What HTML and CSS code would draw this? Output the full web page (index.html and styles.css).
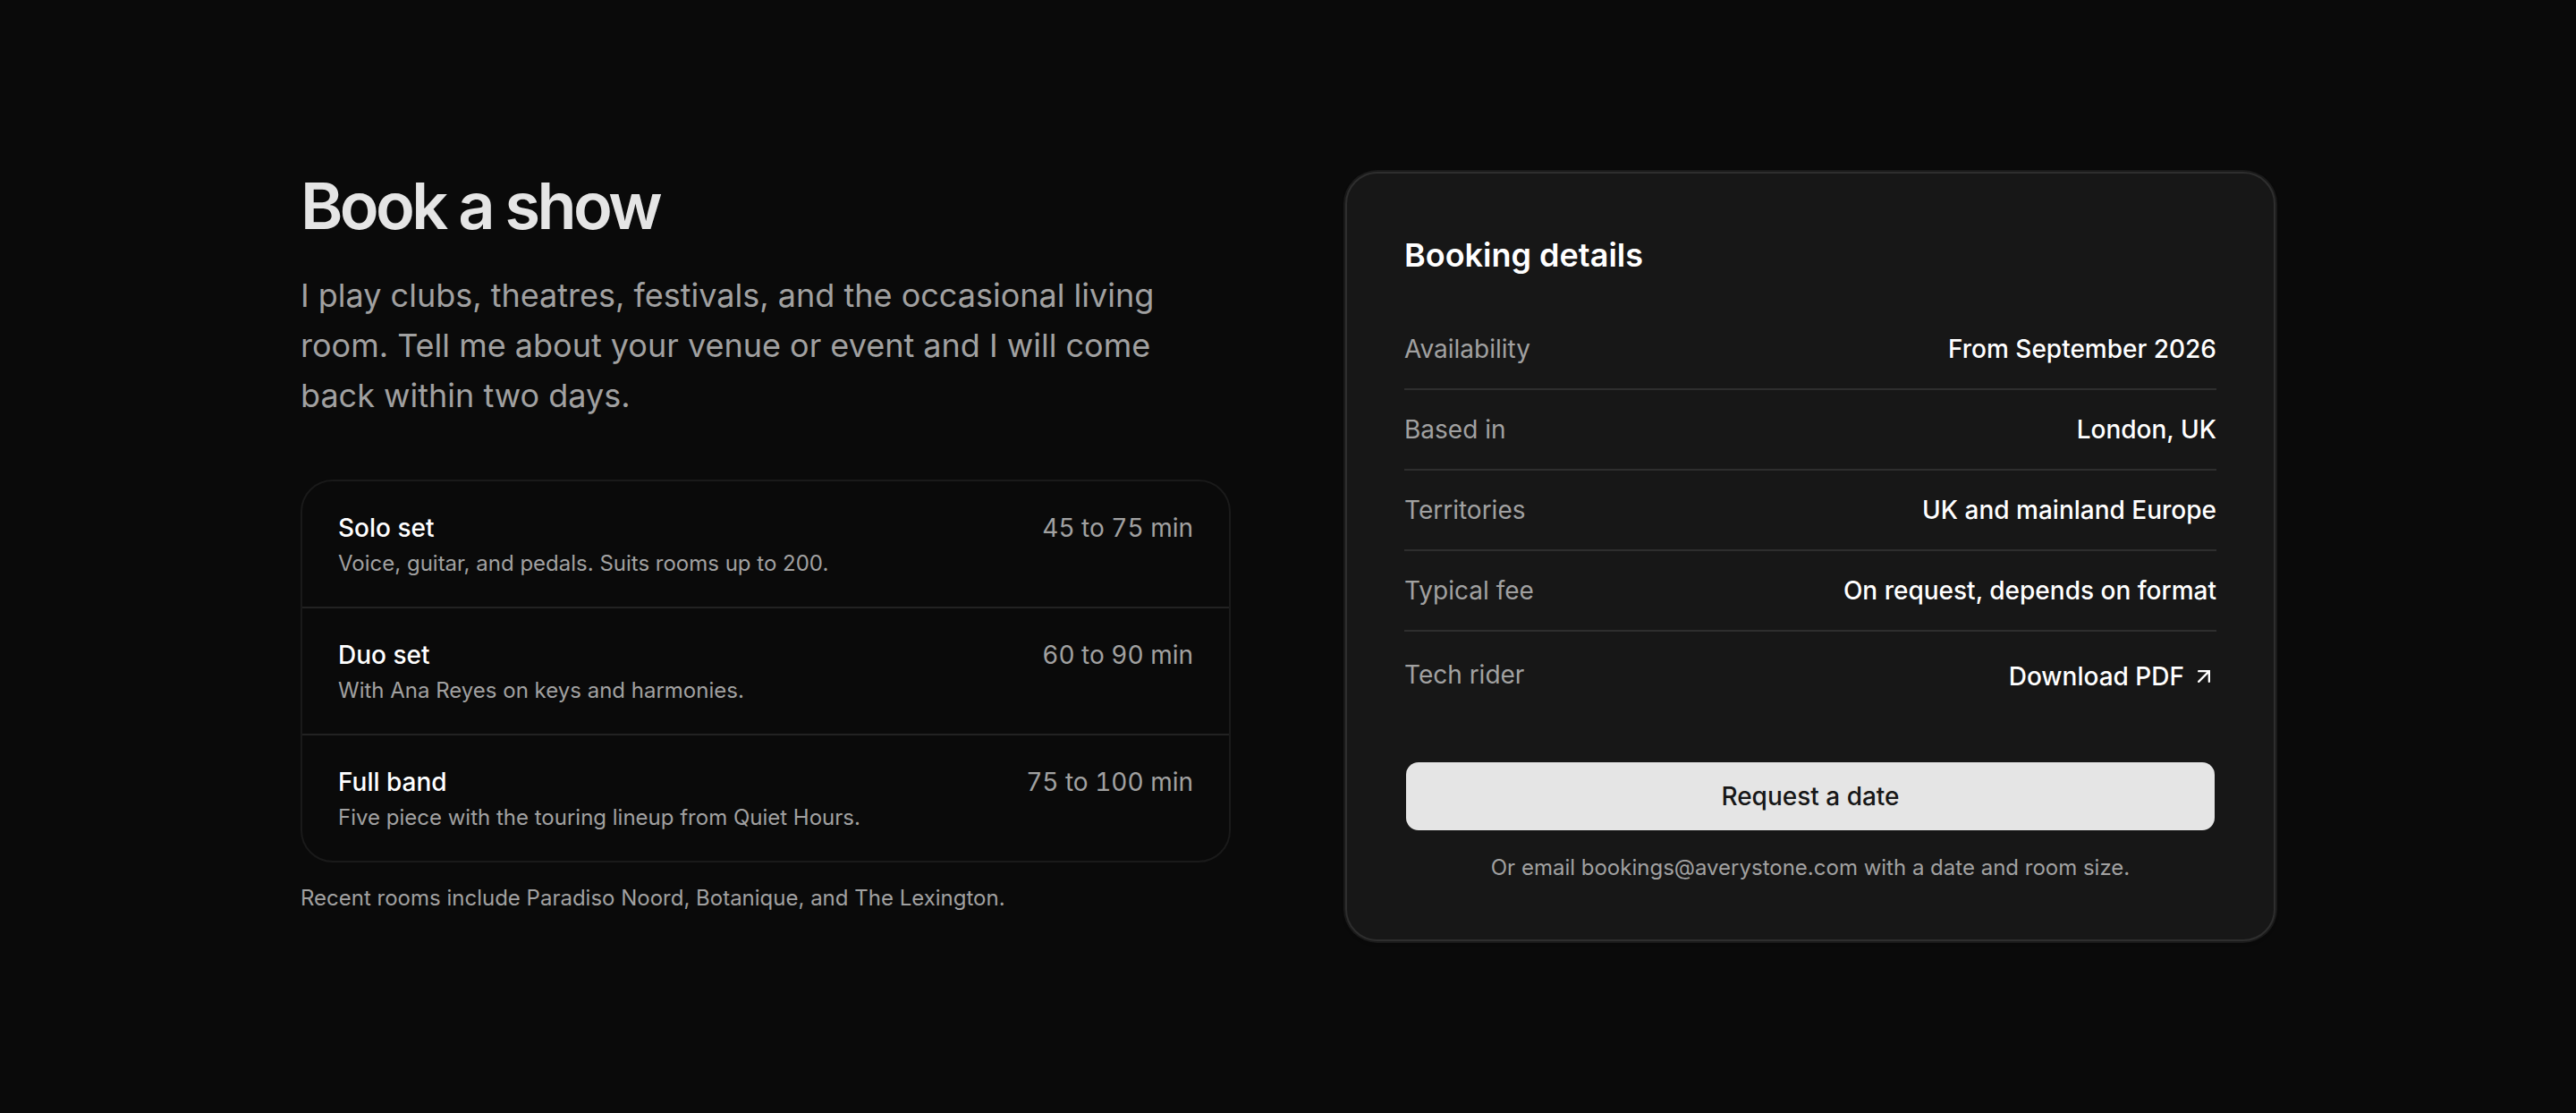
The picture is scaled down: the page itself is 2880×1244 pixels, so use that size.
FILE: index.html
```html
<!DOCTYPE html>
<html lang="en">
<head>
    <meta charset="UTF-8">
    <meta name="viewport" content="width=device-width, initial-scale=1.0">
    <title>Book a show</title>
    <link rel="stylesheet" href="styles.css">
</head>
<body>
    <main class="booking">
        <section class="intro">
            <h1>Book a show</h1>
            <p class="lead">I play clubs, theatres, festivals, and the occasional living room. Tell me about your venue or event and I will come back within two days.</p>

            <ul class="sets">
                <li class="set">
                    <div>
                        <h2 class="set-name">Solo set</h2>
                        <p class="small">Voice, guitar, and pedals. Suits rooms up to 200.</p>
                    </div>
                    <span class="length">45 to 75 min</span>
                </li>
                <li class="set">
                    <div>
                        <h2 class="set-name">Duo set</h2>
                        <p class="small">With Ana Reyes on keys and harmonies.</p>
                    </div>
                    <span class="length">60 to 90 min</span>
                </li>
                <li class="set">
                    <div>
                        <h2 class="set-name">Full band</h2>
                        <p class="small">Five piece with the touring lineup from Quiet Hours.</p>
                    </div>
                    <span class="length">75 to 100 min</span>
                </li>
            </ul>

            <p class="small">Recent rooms include Paradiso Noord, Botanique, and The Lexington.</p>
        </section>

        <section class="card">
            <h2 class="card-title">Booking details</h2>

            <dl class="details">
                <div class="row">
                    <dt>Availability</dt>
                    <dd>From September 2026</dd>
                </div>
                <div class="row">
                    <dt>Based in</dt>
                    <dd>London, UK</dd>
                </div>
                <div class="row">
                    <dt>Territories</dt>
                    <dd>UK and mainland Europe</dd>
                </div>
                <div class="row">
                    <dt>Typical fee</dt>
                    <dd>On request, depends on format</dd>
                </div>
                <div class="row">
                    <dt>Tech rider</dt>
                    <dd>
                        <a class="download" href="#">Download PDF
                            <svg class="arrow" viewBox="0 0 24 24" aria-hidden="true">
                                <path d="M7 7h10v10M7 17 17 7" />
                            </svg>
                        </a>
                    </dd>
                </div>
            </dl>

            <button class="btn" type="button">Request a date</button>
            <p class="small email">Or email bookings@averystone.com with a date and room size.</p>
        </section>
    </main>
</body>
</html>
```
FILE: styles.css
```css
* {
    box-sizing: border-box;
    margin: 0;
    padding: 0;
}

body {
    font-family: Inter, "Liberation Sans", sans-serif;
    font-size: 28px;
    line-height: 40px;
    background-color: #0a0a0a;
    color: #ffffff;
}

.booking {
    display: grid;
    grid-template-columns: 1fr 1fr;
    gap: 128px;
    max-width: 2304px;
    margin: 0 auto;
    padding: 192px 48px;
}

h1 {
    margin-bottom: 34px;
    font-size: 72px;
    font-weight: 600;
    line-height: 76px;
    letter-spacing: -0.05em;
    color: #e5e5e5;
}

.lead {
    margin-bottom: 66px;
    font-size: 36px;
    line-height: 56px;
    color: #a1a1a1;
}

.small {
    font-size: 24px;
    line-height: 40px;
    color: #a1a1a1;
}

/* Set formats */
.sets {
    margin-bottom: 20px;
    border: 2px solid #1a1a1a;
    border-radius: 36px;
    list-style: none;
}

.set {
    display: flex;
    justify-content: space-between;
    gap: 32px;
    padding: 32px 40px 28px;
}

.set + .set {
    border-top: 2px solid #222222;
}

.set-name {
    font-size: 28px;
    font-weight: 500;
}

.length {
    font-variant-numeric: tabular-nums;
    white-space: nowrap;
    color: #a1a1a1;
}

/* Booking card */
.card {
    padding: 64px 64px 60px;
    border: 2px solid #2e2e2e;
    border-radius: 36px;
    background-color: #171717;
    box-shadow: 0 0 0 2px #1a1a1a, 0 2px 4px rgba(0, 0, 0, 0.3);
}

.card-title {
    margin-bottom: 34px;
    font-size: 36px;
    font-weight: 600;
    line-height: 54px;
}

.details {
    margin-bottom: 48px;
}

.row {
    display: flex;
    justify-content: space-between;
    align-items: flex-start;
    padding: 24px 0;
}

.row + .row {
    border-top: 2px solid #2e2e2e;
}

.row:last-child {
    padding-top: 28px;
}

dt {
    color: #a1a1a1;
}

dd {
    font-weight: 500;
}

.download {
    display: flex;
    align-items: center;
    gap: 8px;
    line-height: 44px;
    color: inherit;
    text-decoration: none;
}

.arrow {
    width: 28px;
    height: 28px;
    fill: none;
    stroke: currentColor;
    stroke-width: 2;
    stroke-linecap: round;
    stroke-linejoin: miter;
}

.btn {
    display: block;
    width: 100%;
    height: 80px;
    margin-bottom: 20px;
    border: 2px solid transparent;
    border-radius: 16px;
    background-color: #e5e5e5;
    background-clip: padding-box;
    font: inherit;
    font-weight: 500;
    color: #171717;
    cursor: pointer;
}

.btn:hover {
    background-color: #d4d4d4;
}

.email {
    text-align: center;
}

@media (max-width: 1400px) {
    .booking {
        grid-template-columns: 1fr;
    }
}
```
